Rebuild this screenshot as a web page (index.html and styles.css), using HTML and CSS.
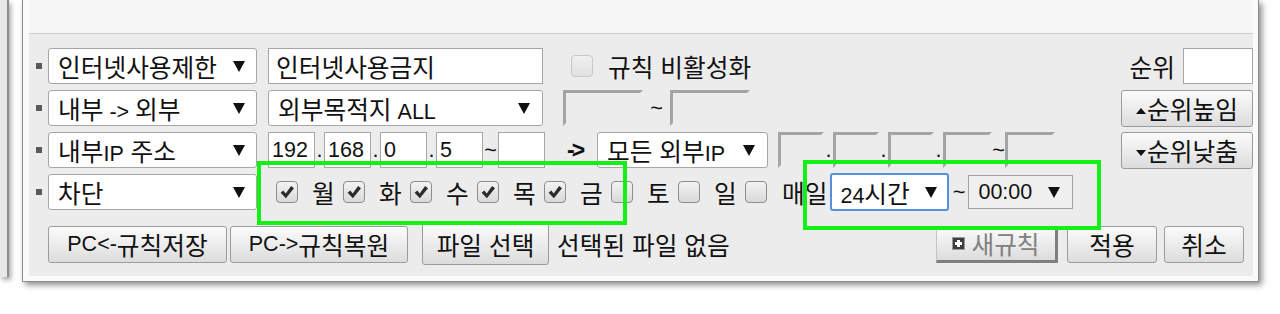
FILE: index.html
```html
<!DOCTYPE html>
<html lang="ko">
<head>
<meta charset="utf-8">
<title>규칙 편집</title>
<link rel="stylesheet" href="styles.css">
</head>
<body>
<div class="desk">
  <div class="backwin"></div>
  <div class="win">
    <div class="frame">
      <div class="topstrip"></div>
      <div class="panel">
        <div class="row">
          <span class="bullet"></span>
          <div class="sel w-main"><span>인터넷사용제한</span><span class="caret"></span></div>
          <input class="field w-name" value="인터넷사용금지">
          <span class="chk chk-dis"></span>
          <span class="lbl-dis">규칙 비활성화</span>
          <div class="right">
            <span class="rank-lbl">순위</span>
            <input class="field rank" value="">
          </div>
        </div>

        <div class="row">
          <span class="bullet"></span>
          <div class="sel w-main"><span>내부<span class="en"> -&gt; </span>외부</span><span class="caret"></span></div>
          <div class="sel w-dest"><span>외부목적지<span class="en"> ALL</span></span><span class="caret"></span></div>
          <span class="sunk w-port first-port"></span>
          <span class="tilde t-port">~</span>
          <span class="sunk w-port"></span>
          <div class="right">
            <button class="btn rank-btn"><span class="tri-up"></span>순위높임</button>
          </div>
        </div>

        <div class="row">
          <span class="bullet"></span>
          <div class="sel w-main"><span>내부<span class="en">IP</span> 주소</span><span class="caret"></span></div>
          <input class="field ip first-ip" value="192">
          <span class="dot">.</span>
          <input class="field ip" value="168">
          <span class="dot">.</span>
          <input class="field ip" value="0">
          <span class="dot">.</span>
          <input class="field ip" value="5">
          <span class="tilde t-ip">~</span>
          <input class="field ip" value="">
          <span class="arrow">-&gt;</span>
          <div class="sel w-ext"><span>모든 외부<span class="en">IP</span></span><span class="caret"></span></div>
          <span class="sunk s-ip first-sip"></span>
          <span class="dot">.</span>
          <span class="sunk s-ip"></span>
          <span class="dot">.</span>
          <span class="sunk s-ip"></span>
          <span class="dot">.</span>
          <span class="sunk s-ip s-ip4"></span>
          <span class="tilde t-sip">~</span>
          <span class="sunk s-ip s-ip5"></span>
          <div class="right">
            <button class="btn rank-btn"><span class="tri-down"></span>순위낮춤</button>
          </div>
        </div>

        <div class="row">
          <span class="bullet"></span>
          <div class="sel w-main"><span>차단</span><span class="caret"></span></div>
          <div class="days">
            <span class="day"><span class="chk on"><svg viewBox="0 0 22 22" width="22" height="22"><path d="M4.6 11.8 L7.3 9.4 L9.7 12.4 L15.1 4.9 L18 7.2 L9.9 17.2 Z"/></svg></span><span class="day-lbl">월</span></span>
            <span class="day"><span class="chk on"><svg viewBox="0 0 22 22" width="22" height="22"><path d="M4.6 11.8 L7.3 9.4 L9.7 12.4 L15.1 4.9 L18 7.2 L9.9 17.2 Z"/></svg></span><span class="day-lbl">화</span></span>
            <span class="day"><span class="chk on"><svg viewBox="0 0 22 22" width="22" height="22"><path d="M4.6 11.8 L7.3 9.4 L9.7 12.4 L15.1 4.9 L18 7.2 L9.9 17.2 Z"/></svg></span><span class="day-lbl">수</span></span>
            <span class="day"><span class="chk on"><svg viewBox="0 0 22 22" width="22" height="22"><path d="M4.6 11.8 L7.3 9.4 L9.7 12.4 L15.1 4.9 L18 7.2 L9.9 17.2 Z"/></svg></span><span class="day-lbl">목</span></span>
            <span class="day"><span class="chk on"><svg viewBox="0 0 22 22" width="22" height="22"><path d="M4.6 11.8 L7.3 9.4 L9.7 12.4 L15.1 4.9 L18 7.2 L9.9 17.2 Z"/></svg></span><span class="day-lbl">금</span></span>
            <span class="day"><span class="chk"></span><span class="day-lbl">토</span></span>
            <span class="day"><span class="chk"></span><span class="day-lbl">일</span></span>
            <span class="day"><span class="chk"></span><span class="day-lbl every">매일</span></span>
          </div>
          <div class="sel time-sel"><span><span class="en">24</span>시간</span><span class="caret"></span></div>
          <span class="tilde t-time">~</span>
          <div class="sel clock-sel"><span class="en">00:00</span><span class="caret"></span></div>
        </div>

        <div class="btn-row">
          <button class="btn b-save"><span class="en">PC&lt;-</span>규칙저장</button>
          <button class="btn b-load"><span class="en">PC-&gt;</span>규칙복원</button>
          <button class="btn b-file">파일 선택</button>
          <span class="file-txt">선택된 파일 없음</span>
          <button class="btn b-new"><span class="plus-ico"></span>새규칙</button>
          <button class="btn b-apply">적용</button>
          <button class="btn b-cancel">취소</button>
        </div>

        <div class="mark mark-days"></div>
        <div class="mark mark-time"></div>
      </div>
    </div>
  </div>
</div>
</body>
</html>
```

FILE: styles.css
```css
* { box-sizing: border-box; }
html, body { margin: 0; padding: 0; background: #fff; }
body {
  width: 1280px;
  height: 314px;
  overflow: hidden;
  font-family: "Liberation Sans", "Noto Sans CJK KR", sans-serif;
  font-size: 24.7px;
  color: #111;
}
.en { font-size: 21.5px; }
.desk { display: flex; align-items: flex-start; }
.backwin {
  flex: none;
  width: 9px;
  height: 277px;
  background: #e8e8e8;
  border-right: 2px solid #8e8e8e;
  box-shadow: 2px 3px 5px rgba(0,0,0,.35);
}
.win {
  flex: none;
  margin-left: 13px;
  width: 1237px;
  height: 282px;
  border: 1px solid #8c8c8c;
  border-top: 0;
  background: #fafafa;
  padding: 0 5px 5px 6px;
  box-shadow: 3px 3px 6px rgba(0,0,0,.45);
}
.frame { height: 276px; display: flex; flex-direction: column; }
.topstrip { flex: none; height: 34px; background: #f6f6f6; border-bottom: 1px solid #c9c9c9; }
.panel { flex: 1; position: relative; background: #ececec; padding: 14px 0 0 7px; }

.row { display: flex; align-items: center; height: 36px; margin-bottom: 6px; white-space: nowrap; }
.bullet { flex: none; width: 6px; height: 6px; background: #5a5a5a; margin-right: 6px; }

.sel {
  flex: none;
  height: 36px;
  background: #fff;
  border: 1px solid #a6a6a6;
  border-radius: 3px;
  display: flex;
  align-items: center;
  justify-content: space-between;
  padding: 0 11px 0 9px;
}
.caret {
  flex: none;
  width: 0; height: 0;
  border-left: 6px solid transparent;
  border-right: 6px solid transparent;
  border-top: 11px solid #111;
}
.w-main { width: 209px; }
.w-dest { width: 275px; margin-left: 11px; padding-right: 12px; }
.w-ext { width: 171px; margin-left: 6px; padding-right: 12px; }

.field {
  flex: none;
  height: 36px;
  border: 1px solid #a6a6a6;
  border-radius: 0;
  background: #fff;
  font: inherit;
  color: #111;
  padding: 0 7px;
  outline: none;
}
.w-name { width: 275px; margin-left: 11px; }
.rank { width: 70px; margin-left: 8px; }
.ip { width: 47px; padding: 0 3px; font-size: 21.5px; }
.first-ip { margin-left: 11px; }
.dot { flex: none; width: 9px; text-align: center; font-size: 21.5px; }

.chk {
  flex: none;
  width: 22px;
  height: 22px;
  border: 1px solid #8d8d8d;
  border-radius: 4px;
  background: linear-gradient(#f3f3f3, #d9d9d9);
  display: inline-flex;
  align-items: center;
  justify-content: center;
}
.chk svg { display: block; margin: -1px; fill: #2b2b2b; }
.chk-dis { margin-left: 28px; border-color: #c8c8c8; background: linear-gradient(#efefef, #e2e2e2); }
.lbl-dis { margin-left: 15px; }

.right { margin-left: auto; display: flex; align-items: center; }

.sunk {
  flex: none;
  height: 36px;
  border-style: solid;
  border-width: 3px;
  border-color: #a4a4a4 #ececec #ececec #a4a4a4;
}
.w-port { width: 80px; }
.first-port { margin-left: 20px; }
.tilde { flex: none; text-align: center; font-size: 21.5px; }
.t-port { width: 27px; }
.t-ip { width: 15px; }
.t-sip { width: 13px; }
.t-time { width: 19px; }
.arrow { flex: none; width: 24px; margin-left: 22px; font-size: 23px; font-weight: 700; letter-spacing: -3px; }
.s-ip { width: 46px; }
.first-sip { margin-left: 10px; }
.s-ip4 { width: 49px; }
.s-ip5 { width: 50px; }

.btn {
  flex: none;
  height: 37px;
  border: 1px solid #9b9b9b;
  border-radius: 3px;
  background: linear-gradient(#fbfbfb, #ececec 50%, #dcdcdc);
  font: inherit;
  color: #111;
  padding: 0;
  display: inline-flex;
  align-items: center;
  justify-content: center;
}
.rank-btn { width: 132px; height: 37px; }
.tri-up, .tri-down { width: 0; height: 0; border-left: 5px solid transparent; border-right: 5px solid transparent; margin-right: 1px; }
.tri-up { border-bottom: 6px solid #111; margin-top: 6px; }
.tri-down { border-top: 6px solid #111; margin-top: 6px; }

.days { display: flex; align-items: center; margin-left: 19px; }
.day { display: flex; align-items: center; }
.day-lbl { width: 22px; margin-left: 14px; margin-right: 9px; }
.day-lbl.every { width: auto; margin-left: 15px; margin-right: 0; }
.time-sel { width: 119px; height: 38px; margin-left: 3px; border: 2px solid #5590dc; padding: 0 10px 0 8px; }
.clock-sel { width: 105px; height: 34px; background: #f0f0f0; border-color: #a3a3a3; border-radius: 0; padding: 0 12px 0 9px; }

.btn-row { display: flex; align-items: center; height: 42px; margin-top: 13px; margin-left: 12px; padding-right: 9px; white-space: nowrap; }
.b-save { width: 179px; }
.b-load { width: 178px; margin-left: 3px; }
.b-file { width: 127px; height: 42px; margin-left: 14px; }
.file-txt { margin-left: 8px; }
.b-new {
  width: 122px;
  margin-left: auto;
  color: #808080;
  border-width: 1px 3px 3px 1px;
  border-color: #c4c4c4 #7f7f7f #7f7f7f #c4c4c4;
  border-radius: 1px;
}
.plus-ico {
  width: 13px;
  height: 13px;
  margin-right: 6px;
  background: #3d3d3d;
  border: 1px solid #9a9a9a;
  position: relative;
}
.plus-ico::before, .plus-ico::after { content: ""; position: absolute; background: #fff; }
.plus-ico::before { left: 2px; right: 2px; top: 4px; height: 3px; }
.plus-ico::after { top: 2px; bottom: 2px; left: 4px; width: 3px; }
.b-apply { width: 90px; margin-left: 9px; }
.b-cancel { width: 80px; margin-left: 7px; }

.mark { position: absolute; border: 4px solid #14f014; }
.mark-days { left: 228px; top: 127px; width: 370px; height: 64px; }
.mark-time { left: 774px; top: 126px; width: 298px; height: 70px; }
```
